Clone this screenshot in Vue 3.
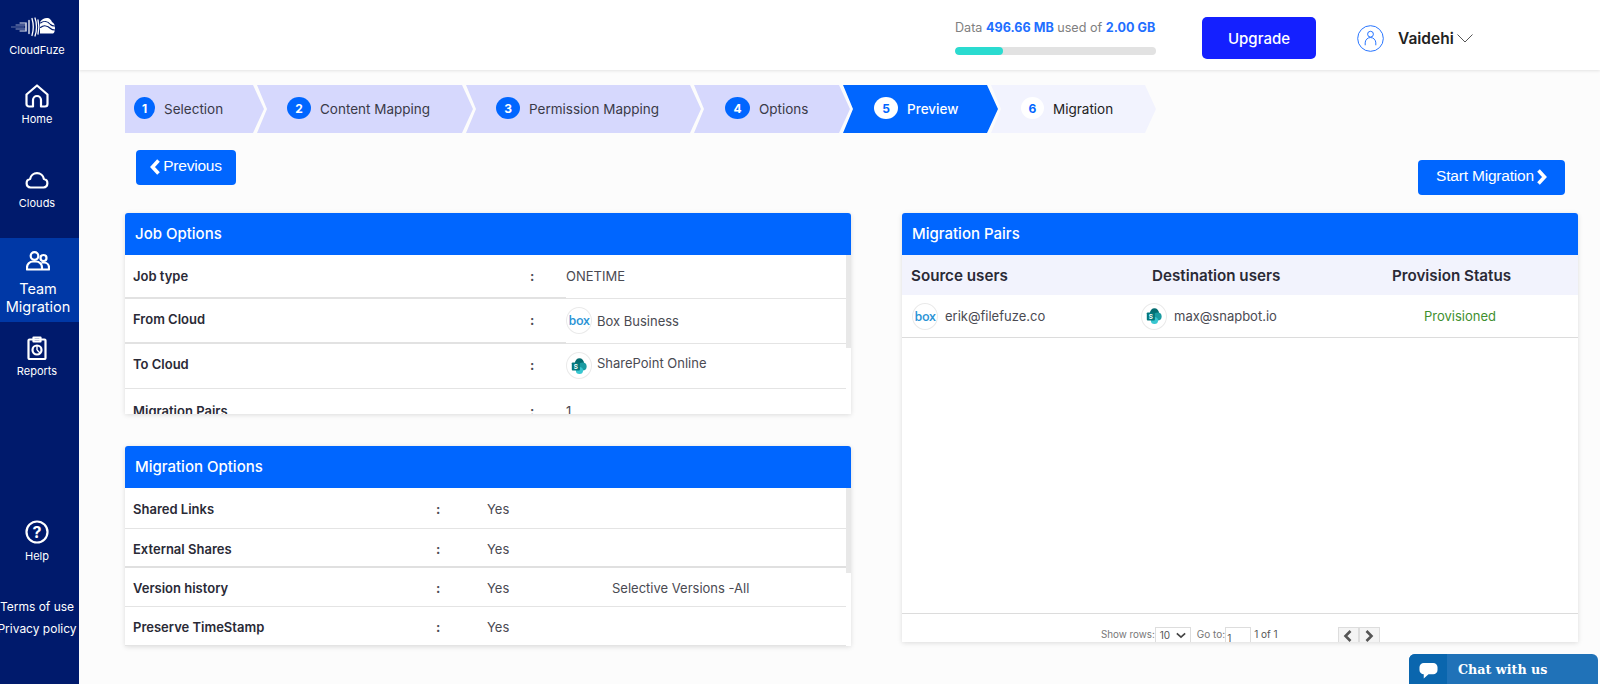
<template>
  <div class="page">
    <aside class="sidebar">
      <div class="brand">
        <svg class="logo" viewBox="0 0 44 20" fill="none" stroke="#fff" stroke-linecap="round">
          <path d="M0 10h13" stroke-width=".7" opacity=".55" />
          <path d="M5 8h9M5 12h9" stroke-width=".8" opacity=".7" />
          <path d="M9 6h5M9 14h5" stroke-width=".9" />
          <path d="M15 6v8M18 3.500v13M21 1.500c1.500 5 1.500 12 0 17M24 1c2 5 2 13 0 18M27 3c1 4 1 10 0 14" stroke-width="1.300" />
          <path d="M29 16.500V5c2-3 5-4.500 8-4 2 .5 3 2 4 4 2 1 3 3 3 6.500 0 2.500-1 5-2 5z" fill="#fff" stroke="none" />
          <path d="M29.500 6c3-2.500 7-2 10 1.500 1 1 2 1.500 4 1.500M29.500 10.500c3-2.500 7-2 10 1 1 1 2 1.500 4.500 1.500" stroke="#001a6c" stroke-width="1.100" />
        </svg>
        <span>CloudFuze</span>
      </div>

      <a class="nav-item home">
        <svg class="nav-icon" viewBox="0 0 24 24"><path d="M1.500 10.500 12 1.500l10.500 9V20a2.500 2.500 0 0 1-2.500 2.500h-4V16a4 4 0 0 0-8 0v6.500H4A2.500 2.500 0 0 1 1.500 20z" /></svg>
        <span>Home</span>
      </a>
      <a class="nav-item clouds">
        <svg class="nav-icon" viewBox="0 0 24 24"><path d="M5.500 19.500a4.300 4.300 0 0 1-.4-8.500 7 7 0 0 1 13.800 0 4.300 4.300 0 0 1-.4 8.500z" /></svg>
        <span>Clouds</span>
      </a>
      <a class="nav-item team">
        <svg class="nav-icon" viewBox="0 0 24 24">
          <circle cx="8.500" cy="7" r="3.800" />
          <circle cx="17.500" cy="9" r="3" />
          <path d="M1 20.500v-2a6 6 0 0 1 6-6h3a6 6 0 0 1 6 6v2zM16 20.500h7v-2a5 5 0 0 0-5-5h-2.500" />
        </svg>
        <span>Team Migration</span>
      </a>
      <a class="nav-item reports">
        <svg class="nav-icon" viewBox="0 0 24 24">
          <rect x="3.500" y="3.500" width="17" height="19.500" rx="1" />
          <path d="M8.500 1.500h7v4h-7z" />
          <circle cx="12" cy="14" r="4.500" />
          <path d="M12 14V10M12 14l3 3" stroke-width="1.400" />
        </svg>
        <span>Reports</span>
      </a>

      <a class="nav-item help">
        <svg class="nav-icon" viewBox="0 0 24 24">
          <circle cx="12" cy="12" r="10.500" />
          <text x="12" y="17.500" text-anchor="middle" class="help-mark">?</text>
        </svg>
        <span>Help</span>
      </a>
      <div class="side-links">
        <a>Terms of use</a>
        <a>Privacy policy</a>
      </div>
    </aside>

    <div class="main">
      <header class="topbar">
        <div class="usage">
          <div class="usage-text">Data <b>{{ usage.used }}</b> used of <b>{{ usage.total }}</b></div>
          <div class="usage-track"><div class="usage-fill" :style="{ width: usage.percent + '%' }"></div></div>
        </div>
        <button class="upgrade">Upgrade</button>
        <div class="user">
          <svg class="avatar" viewBox="0 0 28 28" fill="none" stroke="#1f6fff" stroke-width="1">
            <circle cx="14" cy="14" r="13.300" />
            <circle cx="14" cy="9.500" r="3" />
            <path d="M8.500 21v-2.500a5.500 5.500 0 0 1 11 0V21" />
          </svg>
          <span class="user-name">Vaidehi</span>
          <svg class="user-caret" viewBox="0 0 16 9" fill="none" stroke="#555" stroke-width="1"><path d="M.5.500 8 8l7.500-7.500" /></svg>
        </div>
      </header>

      <div class="content">
        <div class="steps">
          <div
            v-for="step in steps"
            :key="step.num"
            class="step"
            :class="{ active: step.num === 5, pending: step.num === 6 }"
            :style="{ width: step.width + 'px', paddingLeft: step.pad + 'px' }"
          >
            <span class="step-num" :style="{ width: step.size + 'px' }">{{ step.num }}</span>
            <span class="step-name">{{ step.name }}</span>
          </div>
        </div>

        <div class="actions">
          <button class="btn prev">
            <svg viewBox="0 0 10 16" fill="none" stroke="#fff" stroke-width="3.600"><path d="M8.500 1.500 2.500 8l6 6.500" /></svg>
            <span>Previous</span>
          </button>
          <button class="btn start">
            <span>Start Migration</span>
            <svg viewBox="0 0 10 16" fill="none" stroke="#fff" stroke-width="3.600"><path d="M1.500 1.500 7.500 8l-6 6.500" /></svg>
          </button>
        </div>

        <div class="panels">
          <div class="left-col">
            <section class="panel job">
              <h3 class="panel-title">Job Options</h3>
              <div class="scroll-thumb job-thumb"></div>
              <table class="info job-table">
                <tbody>
                  <tr class="thick-left">
                    <td class="label">Job type</td>
                    <td class="colon">:</td>
                    <td>ONETIME</td>
                  </tr>
                  <tr class="thick-left">
                    <td class="label">From Cloud</td>
                    <td class="colon">:</td>
                    <td>
                      <div class="cloud-cell">
                        <span class="cloud-badge"><span class="box-mark">box</span></span>
                        Box Business
                      </div>
                    </td>
                  </tr>
                  <tr>
                    <td class="label">To Cloud</td>
                    <td class="colon">:</td>
                    <td>
                      <div class="cloud-cell">
                        <span class="cloud-badge">
                          <svg class="sp-mark" viewBox="0 0 20 20">
                            <circle cx="10.500" cy="6.500" r="5" fill="#036c70" />
                            <circle cx="14" cy="10.500" r="4.500" fill="#1a9ba1" />
                            <circle cx="10.500" cy="15" r="4" fill="#37c6d0" />
                            <rect x="2" y="6" width="9" height="9" rx="1" fill="#03787c" />
                            <text x="6.500" y="13" text-anchor="middle" class="sp-letter">S</text>
                          </svg>
                        </span>
                        <span class="raised">SharePoint Online</span>
                      </div>
                    </td>
                  </tr>
                  <tr>
                    <td class="label">Migration Pairs</td>
                    <td class="colon">:</td>
                    <td>1</td>
                  </tr>
                </tbody>
              </table>
            </section>

            <section class="panel options">
              <h3 class="panel-title">Migration Options</h3>
              <div class="scroll-thumb options-thumb"></div>
              <table class="info options-table">
                <tbody>
                  <tr v-for="opt in migrationOptions" :key="opt.label" :class="{ thick: opt.thick }">
                    <td class="label">{{ opt.label }}</td>
                    <td class="colon">:</td>
                    <td class="yes">{{ opt.value }}</td>
                    <td>{{ opt.extra }}</td>
                  </tr>
                </tbody>
              </table>
            </section>
          </div>

          <section class="panel pairs">
            <h3 class="panel-title">Migration Pairs</h3>
            <div class="pairs-head">
              <span>Source users</span>
              <span>Destination users</span>
              <span>Provision Status</span>
            </div>
            <div class="pairs-row">
              <div class="cloud-cell source">
                <span class="cloud-badge"><span class="box-mark">box</span></span>
                erik@filefuze.co
              </div>
              <div class="cloud-cell dest">
                <span class="cloud-badge">
                  <svg class="sp-mark" viewBox="0 0 20 20">
                    <circle cx="10.500" cy="6.500" r="5" fill="#036c70" />
                    <circle cx="14" cy="10.500" r="4.500" fill="#1a9ba1" />
                    <circle cx="10.500" cy="15" r="4" fill="#37c6d0" />
                    <rect x="2" y="6" width="9" height="9" rx="1" fill="#03787c" />
                    <text x="6.500" y="13" text-anchor="middle" class="sp-letter">S</text>
                  </svg>
                </span>
                max@snapbot.io
              </div>
              <div class="status">Provisioned</div>
            </div>
            <div class="pairs-empty"></div>
            <div class="pager">
              <span class="show-rows">Show rows:</span>
              <div class="rows-select">
                10
                <svg viewBox="0 0 12 8" fill="none" stroke="#444" stroke-width="2"><path d="M1 1.500 6 6l5-4.500" /></svg>
              </div>
              <span class="goto">Go to:</span>
              <input class="goto-input" type="text" value="1" />
              <span class="page-of">1 of 1</span>
              <div class="page-btns">
                <button><svg viewBox="0 0 10 12" fill="none" stroke="#555" stroke-width="2.600"><path d="M7.500 1 2.500 6l5 5" /></svg></button>
                <button><svg viewBox="0 0 10 12" fill="none" stroke="#555" stroke-width="2.600"><path d="M2.500 1l5 5-5 5" /></svg></button>
              </div>
            </div>
          </section>
        </div>
      </div>
    </div>

    <div class="chat">
      <div class="chat-icon">
        <svg viewBox="0 0 20 18" fill="#fff"><path d="M5 .5h10a4.500 4.500 0 0 1 4.500 4.500v3a4.500 4.500 0 0 1-4.500 4.500H10L5 17v-4.500A4.500 4.500 0 0 1 .5 8V5A4.500 4.500 0 0 1 5 .5z" /></svg>
      </div>
      <span>Chat with us</span>
    </div>
  </div>
</template>

<script setup>
const usage = { used: '496.66 MB', total: '2.00 GB', percent: 24 }

// pad = space before the number, size = circle width
const steps = [
  { num: 1, name: 'Selection', width: 139, pad: 9, size: 21 },
  { num: 2, name: 'Content Mapping', width: 216, pad: 30, size: 24 },
  { num: 3, name: 'Permission Mapping', width: 235, pad: 30, size: 24 },
  { num: 4, name: 'Options', width: 156, pad: 31, size: 25 },
  { num: 5, name: 'Preview', width: 155, pad: 31, size: 24 },
  { num: 6, name: 'Migration', width: 165, pad: 30, size: 23 },
]

const migrationOptions = [
  { label: 'Shared Links', value: 'Yes', extra: '' },
  { label: 'External Shares', value: 'Yes', extra: '', thick: true },
  { label: 'Version history', value: 'Yes', extra: 'Selective Versions -All' },
  { label: 'Preserve TimeStamp', value: 'Yes', extra: '' },
]
</script>

<style>
html,
body {
  margin: 0;
  overflow: hidden;
}
</style>

<style scoped>
.page {
  display: flex;
  height: 684px;
  overflow: hidden;
  position: relative;
  background: #fcfcfc;
  font-family: Inter, "Liberation Sans", sans-serif;
  color: #333;
}

/* sidebar */
.sidebar {
  width: 79px;
  flex: none;
  height: 684px;
  box-sizing: border-box;
  padding-bottom: 44px;
  background: #001a6c;
  color: #fff;
  display: flex;
  flex-direction: column;
}

.brand {
  height: 70px;
  box-sizing: border-box;
  padding: 17px 5px 0 0;
  display: flex;
  flex-direction: column;
  align-items: center;
  font-size: 11px;
}

.brand span {
  margin-top: 6px;
  line-height: 14px;
  white-space: nowrap;
}

.logo {
  width: 44px;
  height: 20px;
  margin-left: -8px;
}

.nav-item {
  display: flex;
  flex-direction: column;
  align-items: center;
  padding-right: 5px;
  font-size: 11px;
  line-height: 14px;
  gap: 4px;
}

.nav-icon {
  width: 24px;
  height: 24px;
  fill: none;
  stroke: #fff;
  stroke-width: 2.200;
  stroke-linejoin: round;
}

.home {
  margin-top: 14px;
}

.clouds {
  margin-top: 42px;
}

.team {
  margin-top: 28px;
  padding: 11px 3px 6px 0;
  background: #0038a6;
  font-size: 14.500px;
  line-height: 18px;
  text-align: center;
  gap: 7px;
}

.reports {
  margin-top: 14px;
}

.help {
  margin-top: auto;
  gap: 5px;
}

.help-mark {
  fill: #fff;
  stroke: none;
  font-size: 16px;
  font-weight: 700;
  font-family: Inter, sans-serif;
}

.side-links {
  margin-top: 33px;
  padding-right: 5px;
  display: flex;
  flex-direction: column;
  align-items: center;
  font-size: 12px;
  line-height: 22px;
  white-space: nowrap;
}

/* top bar */
.main {
  flex: 1;
  min-width: 0;
}

.topbar {
  height: 70px;
  box-sizing: border-box;
  background: #fff;
  box-shadow: 0 1px 3px rgba(0, 0, 0, 0.1);
  display: flex;
  align-items: flex-start;
  padding-left: 876px;
}

.usage {
  width: 201px;
  padding-top: 20px;
}

.usage-text {
  font-size: 12.600px;
  line-height: 16px;
  color: #808080;
  white-space: nowrap;
}

.usage-text b {
  color: #1f6fff;
  font-weight: 700;
}

.usage-track {
  height: 8px;
  margin-top: 11px;
  border-radius: 4px;
  background: #e2e2e2;
  overflow: hidden;
}

.usage-fill {
  height: 100%;
  border-radius: 4px;
  background: #2adbd0;
}

.upgrade {
  width: 114px;
  height: 42px;
  margin: 17px 0 0 46px;
  border: none;
  border-radius: 5px;
  background: #1420ff;
  color: #fff;
  font: 500 15px Inter, sans-serif;
}

.user {
  display: flex;
  align-items: center;
  margin: 25px 0 0 41px;
}

.avatar {
  width: 27px;
  height: 27px;
}

.user-name {
  margin-left: 14px;
  font-size: 15.500px;
  font-weight: 600;
  color: #222;
}

.user-caret {
  width: 16px;
  height: 9px;
  margin-left: 3px;
}

/* content */
.content {
  padding: 15px 22px 0 46px;
}

.steps {
  display: flex;
  height: 48px;
}

.step {
  flex: none;
  box-sizing: border-box;
  margin-left: -7px;
  display: flex;
  align-items: center;
  background: #d6d8fd;
  clip-path: polygon(0 0, calc(100% - 11px) 0, 100% 50%, calc(100% - 11px) 100%, 0 100%, 10px 50%);
  font-size: 13.500px;
}

.step:first-child {
  margin-left: 0;
  clip-path: polygon(0 0, calc(100% - 11px) 0, 100% 50%, calc(100% - 11px) 100%, 0 100%);
}

.step-num {
  height: 22px;
  margin-top: -2px;
  border-radius: 50%;
  background: #0066ff;
  color: #fff;
  font-size: 12px;
  font-weight: 700;
  display: flex;
  align-items: center;
  justify-content: center;
}

.step-name {
  margin-left: 9px;
  white-space: nowrap;
  color: #3a3a48;
}

.step.active {
  background: #0066ff;
}

.step.active .step-num {
  background: #fff;
  color: #0066ff;
}

.step.active .step-name {
  color: #fff;
  font-weight: 500;
}

.step.pending {
  background: #f2f3fe;
}

.step.pending .step-num {
  background: #fff;
  color: #0066ff;
}

.step.pending .step-name {
  color: #222;
}

.actions {
  display: flex;
  justify-content: space-between;
  align-items: flex-start;
  height: 63px;
  margin-top: 17px;
  padding: 0 13px 0 11px;
}

.btn {
  display: flex;
  align-items: center;
  justify-content: center;
  gap: 3px;
  height: 35px;
  border: none;
  border-radius: 4px;
  background: #0066ff;
  color: #fff;
  font: 15.500px "Liberation Sans", Arial, sans-serif;
  letter-spacing: -0.2px;
}

.btn span {
  margin-top: -3px;
}

.btn svg {
  width: 10px;
  height: 16px;
  margin-top: -2px;
}

.prev {
  width: 100px;
}

.start {
  width: 147px;
  margin-top: 10px;
}

.panels {
  display: grid;
  grid-template-columns: 726px 676px;
  gap: 51px;
}

.left-col {
  display: flex;
  flex-direction: column;
  gap: 32px;
}

.panel {
  position: relative;
  background: #fff;
  overflow: hidden;
  border-radius: 3px 3px 0 0;
  box-shadow: 0 1px 5px rgba(0, 0, 0, 0.13);
}

.panel-title {
  height: 42px;
  margin: 0;
  padding-left: 10px;
  background: #0066ff;
  color: #fff;
  font-size: 15px;
  font-weight: 500;
  line-height: 41px;
}

.job {
  height: 201px;
}

.options {
  height: 200px;
}

.scroll-thumb {
  position: absolute;
  right: 0;
  width: 5px;
  background: #e8e8e8;
}

.job-thumb {
  top: 42px;
  height: 93px;
}

.options-thumb {
  top: 42px;
  height: 85px;
}

.info {
  width: 721px;
  border-collapse: collapse;
  table-layout: fixed;
  font-size: 13px;
  color: #4a4a52;
}

.info td {
  padding: 0;
  box-sizing: border-box;
  border-bottom: 1px solid #e4e4e4;
}

.info .label {
  padding-left: 8px;
  font-weight: 600;
  color: #2a2a36;
}

.job-table .label {
  width: 405px;
}

.job-table .colon {
  width: 36px;
}

.job-table tr td {
  height: 45px;
}

.job-table tr:first-child td {
  height: 43px;
}

.job-table tr:nth-child(2) .label {
  padding-bottom: 3px;
}

.job-table tr:nth-child(3) .label {
  padding-bottom: 4px;
}

.job-table tr:nth-child(2) .colon,
.job-table tr:nth-child(3) .colon {
  padding-bottom: 2px;
}

.job-table .thick-left td:nth-child(-n + 2) {
  border-bottom: 2px solid #e2e2e2;
}

.raised {
  margin-top: -5px;
}

.options-table .label {
  width: 311px;
}

.options-table .colon {
  width: 51px;
}

.options-table .yes {
  width: 125px;
}

.options-table td {
  height: 39px;
  padding-top: 3px;
}

.options-table tr:first-child td {
  height: 40px;
}

.options-table .thick td {
  border-bottom: 2px solid #e0e0e0;
}

.colon {
  font-weight: 700;
}

.cloud-cell {
  display: flex;
  align-items: center;
  gap: 5px;
  font-size: 13px;
  color: #4a4a52;
}

.cloud-badge {
  width: 26px;
  height: 27px;
  flex: none;
  box-sizing: border-box;
  border: 1px solid #eaeaea;
  border-radius: 50%;
  display: flex;
  align-items: center;
  justify-content: center;
  background: #fff;
}

.box-mark {
  color: #2a93d5;
  font: 600 12.500px "Open Sans", sans-serif;
  letter-spacing: -0.5px;
}

.sp-mark {
  width: 18px;
  height: 18px;
}

.sp-letter {
  fill: #fff;
  font-size: 7px;
  font-weight: 700;
  font-family: Inter, sans-serif;
}

/* pairs */
.pairs {
  height: 429px;
  display: flex;
  flex-direction: column;
}

.pairs-head {
  height: 40px;
  flex: none;
  display: flex;
  align-items: center;
  background: #f2f3fd;
  font-size: 15.200px;
  font-weight: 600;
  color: #2a2a36;
}

.pairs-head span:nth-child(1) {
  margin-left: 9px;
  width: 241px;
}

.pairs-head span:nth-child(2) {
  width: 240px;
}

.pairs-row {
  height: 43px;
  flex: none;
  box-sizing: border-box;
  display: flex;
  align-items: center;
  border-bottom: 1px solid #dcdcdc;
}

.source {
  margin-left: 10px;
  width: 229px;
  gap: 7px;
}

.dest {
  width: 283px;
  gap: 7px;
}

.status {
  font-size: 13px;
  color: #3f8f2f;
}

.pairs-empty {
  flex: 1;
  border-bottom: 1px solid #dcdcdc;
}

.pager {
  height: 28px;
  flex: none;
  box-sizing: border-box;
  padding: 13px 0 0 199px;
  display: flex;
  align-items: flex-start;
  font-size: 10px;
  line-height: 15px;
  color: #777;
}

.show-rows {
  font-size: 9.800px;
}

.rows-select {
  width: 36px;
  height: 24px;
  box-sizing: border-box;
  padding-left: 4px;
  border: 1px solid #ddd;
  display: flex;
  justify-content: space-between;
  color: #555;
}

.rows-select svg {
  width: 10px;
  height: 7px;
  margin: 4px 4px 0 0;
}

.goto {
  margin-left: 6px;
}

.goto-input {
  width: 26px;
  height: 22px;
  margin-left: 0;
  box-sizing: border-box;
  padding: 0 1px;
  border: 1px solid #ddd;
  font: 10px/15px Inter, sans-serif;
  color: #555;
}

.page-of {
  margin-left: 3px;
  color: #555;
}

.page-btns {
  display: flex;
  margin-left: 60px;
}

.page-btns button {
  width: 21px;
  height: 24px;
  padding: 2px 0 0;
  border: 1px solid #ddd;
  background: #f4f4f4;
  display: flex;
  justify-content: center;
}

.page-btns svg {
  width: 10px;
  height: 12px;
}

/* chat widget */
.chat {
  position: absolute;
  right: 2px;
  bottom: 0;
  width: 189px;
  height: 30px;
  display: flex;
  align-items: center;
  overflow: hidden;
  border-radius: 6px 6px 0 0;
  background: #2072b8;
  color: #fff;
  font: 700 12.700px "DejaVu Serif", serif;
}

.chat-icon {
  width: 38px;
  height: 100%;
  display: flex;
  align-items: center;
  justify-content: center;
  background: #0a66ae;
}

.chat-icon svg {
  width: 19px;
  height: 18px;
  margin-top: 3px;
}

.chat span {
  margin-left: 11px;
}
</style>
